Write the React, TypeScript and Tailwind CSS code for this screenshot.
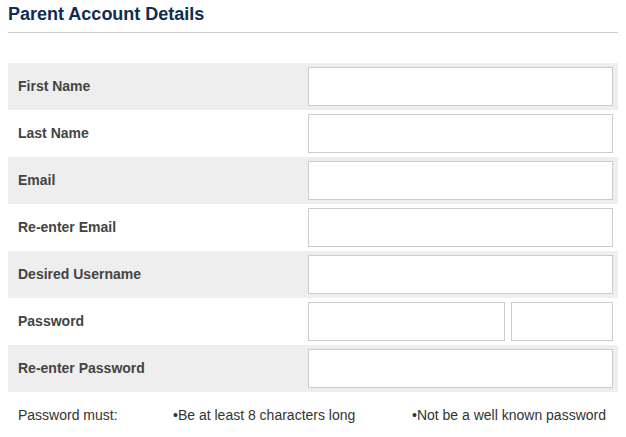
const fields = [
  { label: 'First Name' },
  { label: 'Last Name' },
  { label: 'Email' },
  { label: 'Re-enter Email' },
  { label: 'Desired Username' },
  { label: 'Password', split: true },
  { label: 'Re-enter Password' },
]

export default function App() {
  return (
    <div className="w-[626px] h-[437px] bg-white font-['Liberation_Sans',Arial,sans-serif]">
      <div className="pl-2 pr-2">
        <h1 className="pt-[4px] text-[18px] leading-[20px] font-bold text-[#0f2d52]">Parent Account Details</h1>
        <div className="mt-[8px] h-px bg-[#cccccc]" />

        <div className="mt-[30px]">
          {fields.map((f, i) => (
            <div
              key={f.label}
              className={`flex items-center h-[47px] ${i % 2 === 0 ? 'bg-[#eeeeee]' : 'bg-white'}`}
            >
              <div className="w-[300px] pl-[10px] text-[14px] font-bold text-[#444444]">{f.label}</div>
              {f.split ? (
                <div className="flex gap-[6px] w-[305px]">
                  <input className="w-[197px] h-[39px] bg-white border border-[#cccccc] outline-none" />
                  <input className="w-[102px] h-[39px] bg-white border border-[#cccccc] outline-none" />
                </div>
              ) : (
                <input className="w-[305px] h-[39px] bg-white border border-[#cccccc] outline-none" />
              )}
            </div>
          ))}
        </div>

        <div className="flex mt-[15px] text-[14px] leading-[16px] text-[#333333]">
          <div className="pl-[10px] w-[165px]">Password must:</div>
          <div className="w-[239px]">•Be at least 8 characters long</div>
          <div>•Not be a well known password</div>
        </div>
      </div>
    </div>
  )
}
